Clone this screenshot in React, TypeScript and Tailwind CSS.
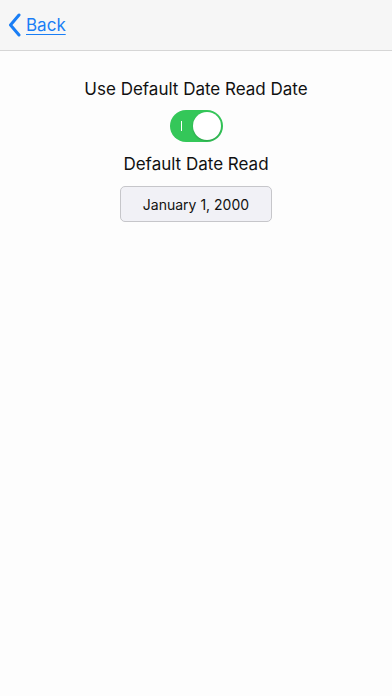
import React from "react";

export default function App() {
  return (
    <div className="w-[392px] h-[696px] bg-[#fdfdfd] flex flex-col" style={{ fontFamily: "Inter, 'Noto Sans', sans-serif" }}>
      <div className="h-[51px] bg-[#f6f6f6] border-b border-[#d6d6d6] flex items-center px-[8px] shrink-0">
        <div className="flex items-center gap-[5px] text-[#1a7ef5]">
          <svg width="13" height="24" viewBox="0 0 13 24" fill="none">
            <path d="M11 2 L2.5 12 L11 22" stroke="#1a7ef5" strokeWidth="3" strokeLinecap="round" strokeLinejoin="round" />
          </svg>
          <span className="text-[17px] underline underline-offset-[3px] decoration-1 leading-none mt-[1px]">Back</span>
        </div>
      </div>
      <div className="flex flex-col items-center pt-[27px]">
        <div className="text-[17px] text-[#111] leading-[22px]">Use Default Date Read Date</div>
        <div className="mt-[10px] w-[53px] h-[32px] rounded-full bg-[#34c759] flex items-center justify-between pl-[11px] pr-[2px]">
          <div className="w-[1.5px] h-[10px] bg-white" />
          <div className="w-[28px] h-[28px] rounded-full bg-white shadow-[0_1px_2px_rgba(0,0,0,0.2)]" />
        </div>
        <div className="mt-[11px] text-[17px] text-[#111] leading-[22px]">Default Date Read</div>
        <div className="mt-[11px] w-[152px] h-[36px] rounded-[5px] bg-[#f1f1f6] border border-[#c6c6ca] flex items-center justify-center text-[14px] text-[#111]">
          January 1, 2000
        </div>
      </div>
    </div>
  );
}
